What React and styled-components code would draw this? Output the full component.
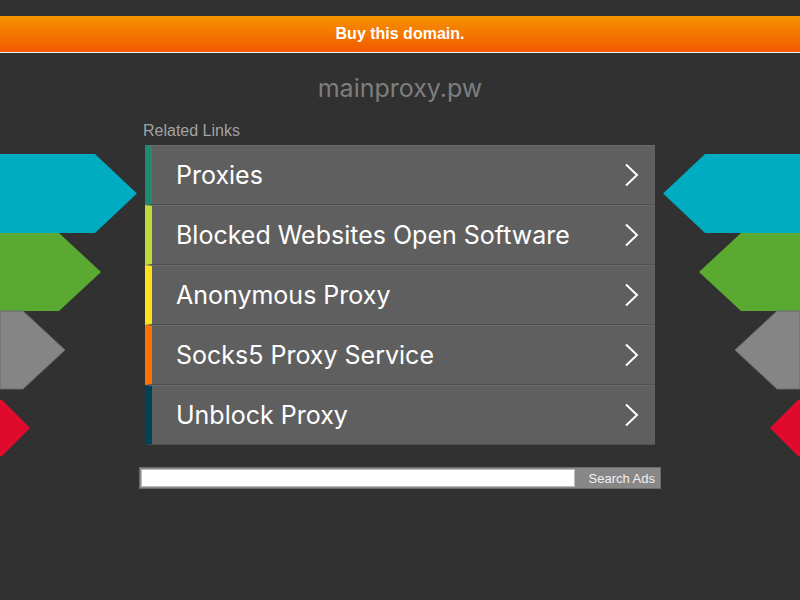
import styled, { createGlobalStyle } from "styled-components"

const Global = createGlobalStyle`
    html, body {
        margin: 0;
        padding: 0;
        background: #313131;
        height: 100%;
    }
    #root {
        min-height: 100%;
    }
`

const Page = styled.div`
    position: relative;
    width: 800px;
    height: 600px;
    overflow: hidden;
    padding-top: 16px;
    box-sizing: border-box;
    font-family: 'Liberation Sans', Arial, sans-serif;
`

const Banner = styled.a`
    display: flex;
    align-items: center;
    justify-content: center;
    height: 36px;
    background: linear-gradient(to bottom, #f79200, #f25a00);
    border-bottom: 1px solid #f4f4f4;
    color: #fff;
    font-weight: bold;
    font-size: 16px;
    text-decoration: none;
`

const Title = styled.h1`
    margin: 18px 0 0;
    text-align: center;
    font-family: 'Inter', sans-serif;
    font-weight: 400;
    font-size: 25px;
    line-height: 34px;
    color: #7e7e7e;
`

const Main = styled.div`
    width: 522px;
    margin: 16px auto 0;
    display: flex;
    flex-direction: column;
`

const Caption = styled.div`
    padding-left: 4px;
    font-size: 16px;
    line-height: 20px;
    color: #a2a2a2;
    margin-bottom: 4px;
`

const List = styled.ul`
    list-style: none;
    margin: 0 6px;
    padding: 0;
`

const Row = styled.li`
    display: flex;
    align-items: center;
    height: 60px;
    box-sizing: border-box;
    background: #5f5f5f;
    border-left: 7px solid ${p => p.$stripe};
    border-top: 1px solid #6b6b6b;
    border-bottom: 1px solid #505050;
    padding: 0 15px 0 24px;
    color: #fff;
    font-family: 'Inter', sans-serif;
    font-size: 25px;
    letter-spacing: 0;
`

const Label = styled.span`
    flex: 1;
`

const Search = styled.form`
    display: flex;
    margin-top: 22px;
    height: 22px;
    background: #878787;
    border: 1px solid #6c6c6c;
    padding: 1px;
    box-sizing: border-box;
`

const Field = styled.div`
    flex: 1;
    background: #fff;
    border: 1px solid #bcbcbc;
    box-sizing: border-box;
`

const Button = styled.div`
    width: 84px;
    display: flex;
    align-items: center;
    justify-content: flex-end;
    padding-right: 4px;
    box-sizing: border-box;
    color: #f0f0f0;
    font-size: 13px;
`

const Deco = styled.svg`
    position: absolute;
    top: 150px;
    ${p => (p.$side === "left" ? "left: 0;" : "right: 0;")}
`

const links = [
    { text: "Proxies", color: "#1f8a70" },
    { text: "Blocked Websites Open Software", color: "#bedb39" },
    { text: "Anonymous Proxy", color: "#ffe11a" },
    { text: "Socks5 Proxy Service", color: "#fd7400" },
    { text: "Unblock Proxy", color: "#004358" },
]

const Chevron = () => (
    <svg width="16" height="24" viewBox="0 0 16 24">
        <path d="M2 1.5 L13 12 L2 22.5" fill="none" stroke="#fff" strokeWidth="2" />
    </svg>
)

// arrow shapes sitting on both edges of the page
const Arrows = ({ side }) => (
    <Deco $side={side} width="140" height="310" viewBox="0 0 140 310"
        style={side === "right" ? { transform: "scaleX(-1)" } : undefined}>
        <polygon points="0,4 95,4 137,43.5 95,83 0,83" fill="#00acc1" />
        <polygon points="0,83 59,83 101,122 59,161 0,161" fill="#5aaa32" />
        <polygon points="0,161 23,161 65,200 23,239 0,239" fill="#858585" stroke="#6a6a6a" strokeWidth="1" />
        <polygon points="-20,250 2,250 30,278 2,306 -20,306" fill="#e00a2d" />
    </Deco>
)

const App = () => {
    return (
        <Page>
            <Global />
            <Arrows side="left" />
            <Arrows side="right" />
            <Banner href="#">Buy this domain.</Banner>
            <Title>mainproxy.pw</Title>
            <Main>
                <Caption>Related Links</Caption>
                <List>
                    {links.map(l => (
                        <Row key={l.text} $stripe={l.color}>
                            <Label>{l.text}</Label>
                            <Chevron />
                        </Row>
                    ))}
                </List>
                <Search>
                    <Field />
                    <Button>Search Ads</Button>
                </Search>
            </Main>
        </Page>
    )
}

export default App
